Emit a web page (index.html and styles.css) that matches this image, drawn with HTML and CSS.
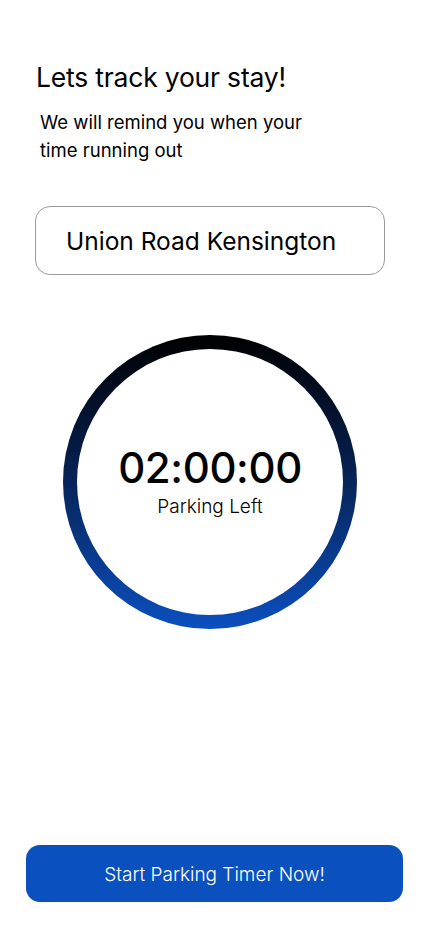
FILE: index.html
```html
<!DOCTYPE html>
<html lang="en">
<head>
<meta charset="utf-8">
<meta name="viewport" content="width=430, initial-scale=1">
<title>Parking Timer</title>
<link rel="stylesheet" href="styles.css">
</head>
<body>
<main class="screen">
  <header class="intro">
    <h1 class="title">Lets track your stay!</h1>
    <p class="subtitle">We will remind you when your<br>time running out</p>
  </header>
  <div class="location">Union Road Kensington</div>
  <div class="timer-wrap">
    <div class="ring">
      <div class="ring-inner">
        <div class="time">02:00:00</div>
        <div class="time-label">Parking Left</div>
      </div>
    </div>
  </div>
  <button class="start-btn" type="button">Start Parking Timer Now!</button>
</main>
</body>
</html>
```
FILE: styles.css
```css
* { box-sizing: border-box; }
html, body { margin: 0; padding: 0; background: #fff; }
body {
  font-family: "Inter", "Noto Sans", sans-serif;
  color: #000;
}
.screen {
  width: 430px;
  height: 932px;
  display: flex;
  flex-direction: column;
  padding: 60px 0 0 0;
}
.intro { padding-left: 36px; }
.title {
  margin: 0;
  font-size: 26.5px;
  line-height: 34px;
  font-weight: 400;
  letter-spacing: -0.2px;
}
.subtitle {
  margin: 14px 0 0 4px;
  font-size: 18.5px;
  line-height: 28px;
  font-weight: 400;
}
.location {
  margin: 42px 0 0 35px;
  width: 350px;
  height: 69px;
  border: 1px solid #9a9a9a;
  border-radius: 15px;
  display: flex;
  align-items: center;
  padding-left: 30px;
  font-size: 24.5px;
}
.timer-wrap {
  display: flex;
  justify-content: flex-start;
  padding-left: 63px;
  margin-top: 60px;
}
.ring {
  width: 294px;
  height: 294px;
  border-radius: 50%;
  padding: 14px;
  background: linear-gradient(180deg, #000000 0%, #06204f 45%, #0b4fbf 100%);
}
.ring-inner {
  width: 100%;
  height: 100%;
  border-radius: 50%;
  background: #fff;
  display: flex;
  flex-direction: column;
  align-items: center;
  justify-content: center;
  padding-bottom: 2px;
}
.time {
  font-size: 42px;
  font-weight: 500;
  line-height: 48px;
  letter-spacing: -0.4px;
}
.time-label {
  margin-top: 4px;
  font-size: 19px;
  line-height: 22px;
  font-weight: 300;
}
.start-btn {
  margin: auto 0 30px 26px;
  width: 377px;
  height: 57px;
  border: none;
  border-radius: 14px;
  background: #0b50bf;
  color: #fff;
  font-family: inherit;
  font-size: 19px;
  font-weight: 300;
  padding-top: 2px;
}
```
